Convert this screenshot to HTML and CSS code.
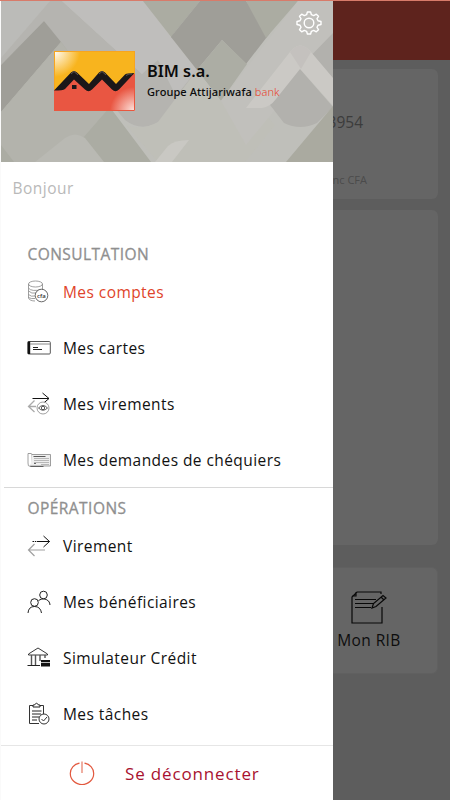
FILE: index.html
```html
<!DOCTYPE html>
<html lang="fr">
<head>
    <meta charset="UTF-8">
    <meta name="viewport" content="width=device-width, initial-scale=1.0">
    <title>BIM s.a.</title>
    <link rel="stylesheet" href="styles.css">
</head>
<body>
    <main class="page">
        <header class="topbar"></header>
        <section class="card account">
            <div class="account-number">3954</div>
            <div class="account-currency">Franc CFA</div>
        </section>
        <section class="card history"></section>
        <section class="card shortcut">
            <svg width="38" height="36" viewBox="0 0 38 36" fill="none" stroke="#080808" stroke-width="1.2">
                <path d="M31 4V2H7L2 7V33H32V17M2 6H6V2M5 9.5H26M5 13.5H24M5 17.500H21"/>
                <path d="M22 18L23.500 13.500L33 5.500L36 8L26 16.500ZM31 7L34 10"/>
            </svg>
            <span class="shortcut-label">Mon RIB</span>
        </section>
    </main>

    <aside class="drawer">
        <div class="banner">
            <svg class="pattern" width="332" height="161" viewBox="1 1 332 161">
                <rect x="1" y="1" width="332" height="161" fill="#bfbfba"/>
                <path d="M1 1H50L1 58Z" fill="#bbbbb8"/>
                <path d="M1 58L50 1H62L142 74L165 46L200 73L160 121Q142 133 125 120L60 42L44 21L1 65Z" fill="#b5b4b0"/>
                <path d="M62 1H143L188 59L197 70L176 96L158 60L142 74Z" fill="#bfbebc"/>
                <path d="M44 21L61 42L1 112V65Z" fill="#9f9e98"/>
                <path d="M61 42L151 162H1V112Z" fill="#abaca3"/>
                <path d="M1 112L61 42L110 107L62 162H14L1 145Z" fill="#b3b3ac"/>
                <path d="M35 162L65 138Q75 131 85 138L104 162Z" fill="#b9b9b3"/>
                <path d="M143 1H200L174 33L172 38Z" fill="#abaca2"/>
                <path d="M174 33L200 1H246L270 33L246 64L222 40L197 70L171 37Z" fill="#9f9e98"/>
                <path d="M222 40L247 64L221 101L197 70Z" fill="#acada4"/>
                <path d="M197 70L221 101L235 82L275 125L245 162H158L126 125Q142 131 158 122Z" fill="#bfbfb8"/>
                <path d="M246 1H298L266 38Z" fill="#abaca2"/>
                <path d="M298 1H333V39L302 77L246 145L221 101Z" fill="#c1c0bc"/>
                <path d="M300 69L333 107L317 123Q300 131 284 123L267 101L333 33V105Z" fill="#b2b1ad"/>
                <path d="M333 106V162H286Z" fill="#aaaaa0"/>
                <path d="M246 108L290 52Q300 39 311 52L333 78V106L300 69L276 99Q270 107 262 108Z" fill="#cbc9c5"/>
                <path d="M290 52Q300 39 311 52L301 69Z" fill="#c4c1be"/>
                <path d="M155 162L168 146Q174 140 189 140L172 162Z" fill="#c9c8c3"/>
            </svg>
            <div class="brand">
                <svg width="81" height="60" viewBox="0 0 81 60">
                    <defs>
                        <radialGradient id="shineTop" gradientUnits="userSpaceOnUse" cx="0" cy="0" r="26">
                            <stop offset="0" stop-color="#fff"/>
                            <stop offset="1" stop-color="#f8b41e"/>
                        </radialGradient>
                        <radialGradient id="shineBottom" gradientUnits="userSpaceOnUse" cx="80" cy="60" r="24">
                            <stop offset="0" stop-color="#fde5df"/>
                            <stop offset="1" stop-color="#e95642"/>
                        </radialGradient>
                    </defs>
                    <rect width="81" height="60" fill="#f8a51e"/>
                    <rect x="1" y="1" width="79" height="58" fill="url(#shineTop)"/>
                    <path d="M0 39L8 38L20 24L35 38L48 24L62 38L75 23H81V60H0Z" fill="url(#shineBottom)"/>
                    <path d="M0.500 40V59.500H80.500V24" fill="none" stroke="#e9573f"/>
                    <path d="M0 39.500L17 21.500Q20 18.500 23 21.500L35 33L45 21.500Q48 18.500 51 21.500L62 33L71 23.500Q73 22 80.500 22L65 38.500Q61.500 42 58 38.500L48 28.500L38 38.500Q34.500 42 31 38.500L20 28.500L11 38Q9 39.500 0 39.500Z" fill="#1b1719"/>
                    <path d="M17 23L20 20.500L24 24M45 23L48 20.500L52 24M72 24.500L75 23H78" fill="none" stroke="#5a5452"/>
                    <rect x="18" y="34" width="4.500" height="4" fill="#1b1719"/>
                </svg>
                <div class="brand-text">
                    <div class="brand-name">BIM s.a.</div>
                    <div class="brand-group">Groupe Attijariwafa <span>bank</span></div>
                </div>
            </div>
            <svg class="settings" width="26" height="24" viewBox="0 0 26 24" fill="none" stroke="#fff" stroke-width="1.400">
                <path d="M10.600 3.700L11.400 1H14.600L15.400 3.700L17.700 4.600L20.300 3.200L22.500 5.300L21 7.700L22 9.800L25 10.500V13.500L22 14.200L21 16.300L22.500 18.700L20.300 20.800L17.700 19.400L15.400 20.300L14.600 23H11.400L10.600 20.300L8.300 19.400L5.700 20.800L3.500 18.700L5 16.300L4 14.200L1 13.500V10.500L4 9.800L5 7.700L3.500 5.300L5.700 3.200L8.300 4.600Z" stroke-linejoin="round"/>
                <circle cx="13" cy="12" r="4.800"/>
            </svg>
        </div>

        <p class="hello">Bonjour</p>

        <nav class="menu">
            <h2 class="menu-title">CONSULTATION</h2>
            <a class="item active">
                <svg width="24" height="24" viewBox="0 0 24 24" fill="none" stroke="#888" stroke-width=".8">
                    <ellipse cx="8.500" cy="4" rx="7" ry="3"/>
                    <path d="M1.500 4V18C2 20 5 21 8 21M15.500 4V10M1.500 8Q4 12 15.500 9.500M1.500 11Q4 14 10 13M1.500 14.500Q4 17 8 16M1.500 17.500Q4 19 8 18.500"/>
                    <circle cx="14.500" cy="15.500" r="6.300" fill="#fff" stroke="#444"/>
                    <text class="cfa" x="10" y="18">cfa</text>
                </svg>
                <span>Mes comptes</span>
            </a>
            <a class="item">
                <svg width="24" height="24" viewBox="0 0 24 24" fill="none" stroke="#555">
                    <rect x=".8" y="5.500" width="22.500" height="12.500" rx="1"/>
                    <path d="M2 5.500V18" stroke="#111" stroke-width="2.400"/>
                    <path d="M3 8H23" stroke="#888"/>
                    <path d="M6 11.500H11M6 13.500H15" stroke="#222"/>
                </svg>
                <span>Mes cartes</span>
            </a>
            <a class="item">
                <svg width="24" height="24" viewBox="0 0 24 24" fill="none" stroke="#111">
                    <path d="M5.500 6.500H22M15.500 1L22 6.500L15.500 12"/>
                    <path d="M9 14.500H1.500M7.500 8.500L1.500 14.500L7.500 20" stroke="#aaa" stroke-width="1.300"/>
                    <circle cx="16" cy="16" r="6" fill="#fff" stroke="#888" stroke-width=".8"/>
                    <path d="M11.500 16Q16 11 20.500 16Q16 20.500 11.500 16Z" stroke="#333" stroke-width=".8"/>
                    <circle cx="16" cy="16" r="1.700" stroke="#333" stroke-width=".8"/>
                </svg>
                <span>Mes virements</span>
            </a>
            <a class="item">
                <svg width="24" height="24" viewBox="0 0 24 24" fill="none" stroke="#888" stroke-width=".8">
                    <path d="M5 7V15L3.500 18.500Q.5 18.500 1 15V5.500H4Q5 5.500 5 7Z"/>
                    <path d="M5 6.500H23.500V18H3.500" fill="#eee"/>
                    <path d="M6.500 8.500H18.500" stroke="#333"/>
                    <path d="M7 10.500H22M7 12.500H22M7 14.500H22M14 16.500H22" stroke="#aaa"/>
                    <path d="M7 15.500H9M3.500 18.500H16.500" stroke="#444"/>
                </svg>
                <span>Mes demandes de chéquiers</span>
            </a>
        </nav>

        <nav class="menu operations">
            <h2 class="menu-title">OPÉRATIONS</h2>
            <a class="item">
                <svg width="24" height="24" viewBox="0 0 24 24" fill="none" stroke="#111">
                    <path d="M5.500 7.500H10" stroke-dasharray="1.500 .8"/>
                    <path d="M10 7.500H22.500M16.500 2L22.500 7.500L16.500 13"/>
                    <path d="M18 16H1.500M7.500 10L1.500 16L7.500 22" stroke="#a0a0a0" stroke-width="1.200"/>
                </svg>
                <span>Virement</span>
            </a>
            <a class="item">
                <svg width="24" height="24" viewBox="0 0 24 24" fill="none" stroke="#222">
                    <circle cx="16.500" cy="5" r="3.800"/>
                    <path d="M11.500 10.500Q17 7 21.500 11Q23 13 23 15"/>
                    <circle cx="7.500" cy="12.500" r="3.800"/>
                    <path d="M1 23Q1.500 16.500 7.500 16.500Q13.500 16.500 14.500 23"/>
                </svg>
                <span>Mes bénéficiaires</span>
            </a>
            <a class="item">
                <svg width="24" height="24" viewBox="0 0 24 24" fill="none" stroke="#222">
                    <path d="M1.500 8L11 2L20.500 8V9H1.500Z" stroke-width=".9"/>
                    <path d="M4.500 9V19M8.500 9V19M13 9V15M18 9V12" stroke="#555" stroke-width="1.400"/>
                    <path d="M.500 19.500H13"/>
                    <rect x="14" y="14" width="9" height="6.500" fill="#111" stroke="none"/>
                    <path d="M14 16.500H23" stroke="#bbb"/>
                </svg>
                <span>Simulateur Crédit</span>
            </a>
            <a class="item">
                <svg width="24" height="24" viewBox="0 0 24 24" fill="none" stroke="#333">
                    <path d="M6 3.500H2.500V21.500H12M13 3.500H16.500V13"/>
                    <path d="M6 5V3H7.500Q9.500-.5 11.500 3H13V5Z" stroke="#222"/>
                    <path d="M5 9H14.500M5 12H14M5 15H12M5 18H10" stroke="#222"/>
                    <circle cx="17" cy="17" r="5" fill="#fff"/>
                    <path d="M14.500 17L16.500 19L20 15"/>
                </svg>
                <span>Mes tâches</span>
            </a>
        </nav>

        <a class="logout">
            <svg width="26" height="26" viewBox="0 0 26 26" fill="none" stroke="#e2583e" stroke-width="1.200">
                <path d="M10.500 3.200C4.800 4.200 1.300 8.500 1.300 13.500C1.300 19.500 6.500 24.500 13 24.500C19.500 24.500 24.700 19.500 24.700 13.500C24.700 8.500 21.200 4.200 15.500 3.200"/>
                <path d="M13 1.500V13" stroke="#ec9a8a" stroke-width="1.600"/>
            </svg>
            <span>Se déconnecter</span>
        </a>
    </aside>
</body>
</html>
```
FILE: styles.css
```css
* {
    box-sizing: border-box;
}
body {
    position: relative;
    width: 450px;
    height: 800px;
    margin: 0;
    overflow: hidden;
    background-color: #5d5d5d;
    font-family: "Open Sans", "Noto Sans", sans-serif;
    border-top: 1px solid #d87b6a;
}
.page {
    display: flex;
    flex-direction: column;
    height: 799px;
    padding-right: 12px;
}
.topbar {
    flex: none;
    height: 59px;
    margin-right: -12px;
    background-color: #5e231d;
}
.card {
    flex: none;
    margin-left: 12px;
    background-color: #656565;
    border-radius: 6px;
}
.account {
    display: flex;
    flex-direction: column;
    align-items: flex-end;
    height: 130px;
    margin-top: 9px;
    padding: 41px 71px 0 0;
    color: #3c3c3c;
}
.account-number {
    padding-right: 4px;
    font-size: 15.5px;
    line-height: 24px;
}
.account-currency {
    margin-top: 38px;
    font-size: 11px;
    line-height: 16px;
    color: #4b4b4b;
}
.history {
    height: 335px;
    margin-top: 11px;
}
.shortcut {
    display: flex;
    flex-direction: column;
    align-items: center;
    align-self: flex-end;
    width: 138px;
    height: 107px;
    margin-top: 22px;
    padding-top: 22px;
    border: 1px solid #606060;
}
.shortcut-label {
    margin-top: 2px;
    font-size: 15.5px;
    line-height: 24px;
    letter-spacing: 0.4px;
    color: #0d0d0d;
}
/* Side menu, opened over the page */
.drawer {
    position: absolute;
    top: 0;
    left: 0;
    display: flex;
    flex-direction: column;
    width: 333px;
    height: 799px;
    background-color: #fff;
    border-left: 1px solid #fafafa;
}
.banner {
    position: relative;
    flex: none;
    height: 161px;
}
.pattern {
    position: absolute;
    top: 0;
    left: 0;
}
.brand {
    position: relative;
    display: flex;
    gap: 12px;
    padding: 50px 0 0 53px;
    color: #0b0b0b;
}
.brand-text {
    padding-top: 9px;
    white-space: nowrap;
}
.brand-name {
    font-family: "Noto Sans", sans-serif;
    font-size: 16.3px;
    font-weight: 600;
    line-height: 22px;
}
.brand-group {
    font-family: "Noto Sans", sans-serif;
    font-size: 11px;
    font-weight: 500;
    line-height: 19px;
    letter-spacing: 0.1px;
}
.brand-group span {
    font-weight: 300;
    color: #e8402a;
}
.settings {
    position: absolute;
    top: 9.5px;
    right: 11px;
}
.hello {
    margin: 14px 0 0 11.5px;
    font-size: 15.5px;
    line-height: 24px;
    letter-spacing: 0.5px;
    color: #b9b9b9;
}
.menu {
    margin-top: 41px;
}
.operations {
    margin: 0 0 0 3px;
    padding-top: 7px;
    border-top: 1px solid #d8d8d8;
}
.operations .menu-title {
    margin-left: 23.5px;
}
.operations .item {
    padding-left: 23px;
}
/* pulled up so that the first row sits closer to the title */
.menu-title {
    margin: 0 0 -3px 26.5px;
    font-size: 15.5px;
    font-weight: 500;
    line-height: 26px;
    letter-spacing: 0.45px;
    color: #8f8f8f;
    -webkit-text-stroke: 0.3px #8f8f8f;
}
.item {
    display: flex;
    align-items: center;
    gap: 12px;
    height: 55.75px;
    padding-top: 1px;
    padding-left: 26px;
    font-size: 15.5px;
    letter-spacing: 0.43px;
    color: #111;
}
.active {
    color: #e0442b;
}
.cfa {
    font-size: 6px;
    letter-spacing: 0;
    font-weight: 600;
    fill: #333;
    stroke: none;
}
.logout {
    display: flex;
    align-items: center;
    gap: 30px;
    height: 55px;
    margin-top: auto;
    padding-left: 68px;
    border-top: 1px solid #e6e6e6;
    font-size: 17px;
    letter-spacing: 0.85px;
    color: #a8122f;
}
```
